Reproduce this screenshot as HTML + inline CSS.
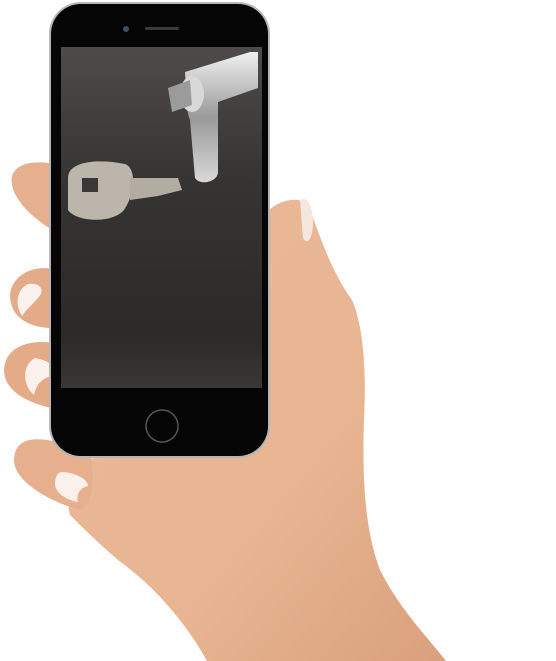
<!DOCTYPE html>
<html><head><style>html,body{margin:0;padding:0;background:#fff;width:556px;height:661px;overflow:hidden}</style></head>
<body>
<svg width="556" height="661" viewBox="0 0 556 661" xmlns="http://www.w3.org/2000/svg">
<defs>
<linearGradient id="skin" x1="0" y1="0" x2="1" y2="1">
<stop offset="0" stop-color="#eab999"/><stop offset="0.6" stop-color="#e8b592"/><stop offset="1" stop-color="#d9a07c"/>
</linearGradient>
<linearGradient id="scr" x1="0" y1="0" x2="0" y2="1">
<stop offset="0" stop-color="#4e4b4a"/><stop offset="0.4" stop-color="#363433"/><stop offset="0.85" stop-color="#2c2a29"/><stop offset="1" stop-color="#3a3837"/>
</linearGradient>
<linearGradient id="metal" x1="0" y1="0" x2="0" y2="1">
<stop offset="0" stop-color="#f0f0f0"/><stop offset="0.5" stop-color="#9a9a9a"/><stop offset="1" stop-color="#d8d8d8"/>
</linearGradient>
</defs>
<path d="M265,215 C275,200 300,195 308,205 C318,230 330,270 352,300 C365,330 366,380 364,420 C362,480 365,530 380,570 C400,610 430,640 446,661 L207,661 C190,630 160,590 118,560 C95,540 80,525 70,515 L60,460 L250,450 Z" fill="url(#skin)"/>
<path d="M300,200 C308,196 313,205 313,225 C312,240 307,245 303,238 Z" fill="#f6e6e0"/>
<path d="M60,165 C30,158 8,165 12,185 C16,205 40,225 70,240 Z" fill="#e6b08e"/>
<path d="M62,272 C40,262 12,272 10,295 C10,318 30,330 62,328 Z" fill="#e3ab88"/>
<path d="M28,284 C40,282 46,290 38,298 C32,305 26,310 22,316 C15,305 16,290 28,284 Z" fill="#faf0ec"/>
<path d="M62,345 C40,338 5,342 4,370 C4,392 30,405 62,410 Z" fill="#e3ab88"/>
<path d="M35,358 C48,360 60,368 52,376 C42,378 36,385 34,395 C22,385 22,365 35,358 Z" fill="#faf0ec"/>
<path d="M70,445 C50,440 15,430 14,460 C14,480 45,500 80,510 C95,505 95,470 90,455 Z" fill="#e6b08e"/>
<path d="M62,472 C72,472 88,478 88,486 C80,488 76,494 78,502 C65,500 55,492 55,484 C55,476 58,472 62,472 Z" fill="#faf0ec"/>
<rect x="49" y="2" width="221" height="456" rx="32" fill="#b8b6b4"/>
<rect x="51" y="4" width="217" height="452" rx="30" fill="#050505"/>
<rect x="61" y="47" width="201" height="341" fill="url(#scr)"/>
<circle cx="126" cy="29" r="3" fill="#3d5060"/>
<rect x="145" y="27" width="34" height="3" rx="1.5" fill="#3a3a3a"/>
<circle cx="162" cy="426" r="16" fill="#050505" stroke="#555" stroke-width="1.5"/>
<path d="M185,72 L250,52 L258,52 L258,88 L218,102 L218,172 C218,182 200,186 195,178 L190,120 C186,110 186,90 185,72 Z" fill="url(#metal)"/>
<ellipse cx="192" cy="94" rx="12" ry="18" fill="#d8d8d8"/>
<path d="M168,88 L190,80 L192,105 L172,112 Z" fill="#9b9b9b"/>
<path d="M68,178 C68,162 95,158 125,164 C136,168 136,192 124,210 C112,224 76,222 68,210 Z" fill="#bcb5ab"/>
<rect x="82" y="178" width="16" height="14" fill="#3a3836"/>
<path d="M130,178 L178,178 L182,190 L158,196 L130,200 Z" fill="#b3aca2"/>
</svg>
</body></html>
